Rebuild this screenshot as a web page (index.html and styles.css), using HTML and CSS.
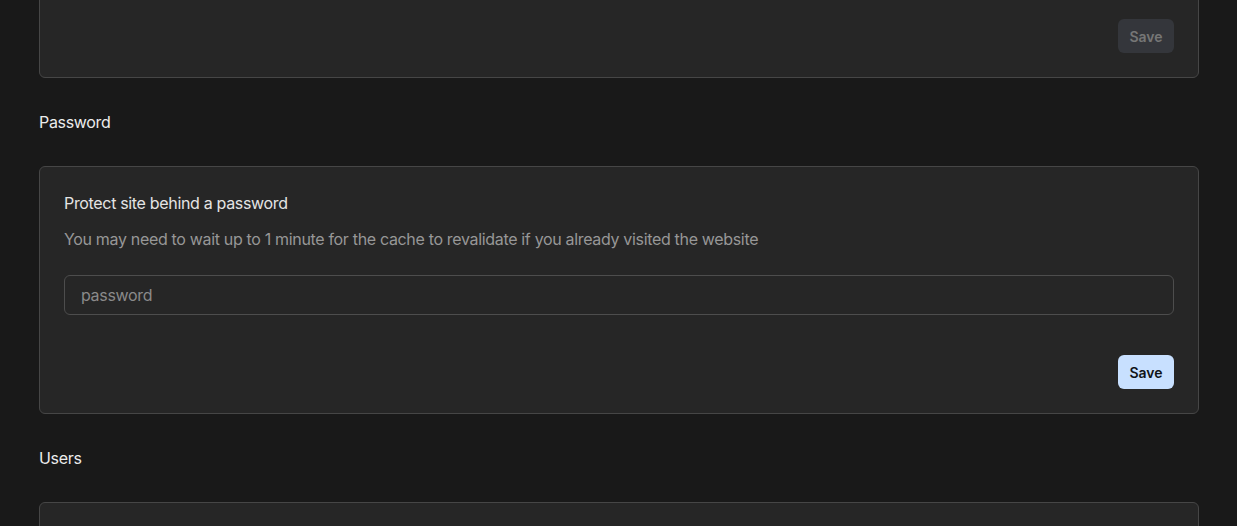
FILE: index.html
```html
<!DOCTYPE html>
<html>
<head>
<meta charset="utf-8">
<link rel="stylesheet" href="styles.css">
</head>
<body>
<main class="page">
  <section class="card card-first">
    <div class="card-footer">
      <button class="btn btn-disabled" disabled>Save</button>
    </div>
  </section>

  <h2 class="section-title">Password</h2>
  <section class="card">
    <div class="card-title">Protect site behind a password</div>
    <p class="card-desc">You may need to wait up to 1 minute for the cache to revalidate if you already visited the website</p>
    <input class="input" type="password" placeholder="password">
    <div class="card-footer footer-gap">
      <button class="btn btn-primary">Save</button>
    </div>
  </section>

  <h2 class="section-title">Users</h2>
  <section class="card card-last"></section>
</main>
</body>
</html>
```
FILE: styles.css
```css
* { box-sizing: border-box; }
html, body {
  margin: 0;
  background: #191919;
  font-family: Inter, "Noto Sans", sans-serif;
  color: #e6e6e6;
  overflow: hidden;
}
.page {
  width: 1160px;
  margin-left: 39px;
  letter-spacing: -0.33px;
}
.card {
  background: #262626;
  border: 1px solid #464646;
  border-radius: 6px;
  padding: 24px;
}
.card-first {
  margin-top: -6px;
}
.card-last {
  height: 120px;
}
.section-title {
  margin: 32px 0;
  font-size: 16px;
  line-height: 24px;
  font-weight: 400;
  color: #ececec;
}
.card-title {
  font-size: 16px;
  line-height: 24px;
  font-weight: 400;
  color: #e4e4e4;
}
.card-desc {
  margin: 12px 0 0;
  font-size: 16px;
  line-height: 24px;
  color: #979797;
}
.input {
  display: block;
  width: 100%;
  height: 40px;
  margin-top: 24px;
  padding: 0 16px;
  background: #262626;
  border: 1px solid #4d4d4d;
  border-radius: 6px;
  font-family: inherit;
  font-size: 16px;
  letter-spacing: -0.33px;
  color: #e6e6e6;
  outline: none;
}
.input::placeholder { color: #8a8a8a; }
.card-footer {
  display: flex;
  justify-content: flex-end;
}
.footer-gap { margin-top: 40px; }
.btn {
  width: 56px;
  height: 34px;
  padding: 0;
  border: none;
  border-radius: 6px;
  font-family: inherit;
  font-size: 14px;
  font-weight: 600;
  letter-spacing: 0;
  cursor: pointer;
}
.btn-disabled {
  background: #34363b;
  color: #767676;
}
.btn-primary {
  background: #c8e0ff;
  color: #111418;
}
```
